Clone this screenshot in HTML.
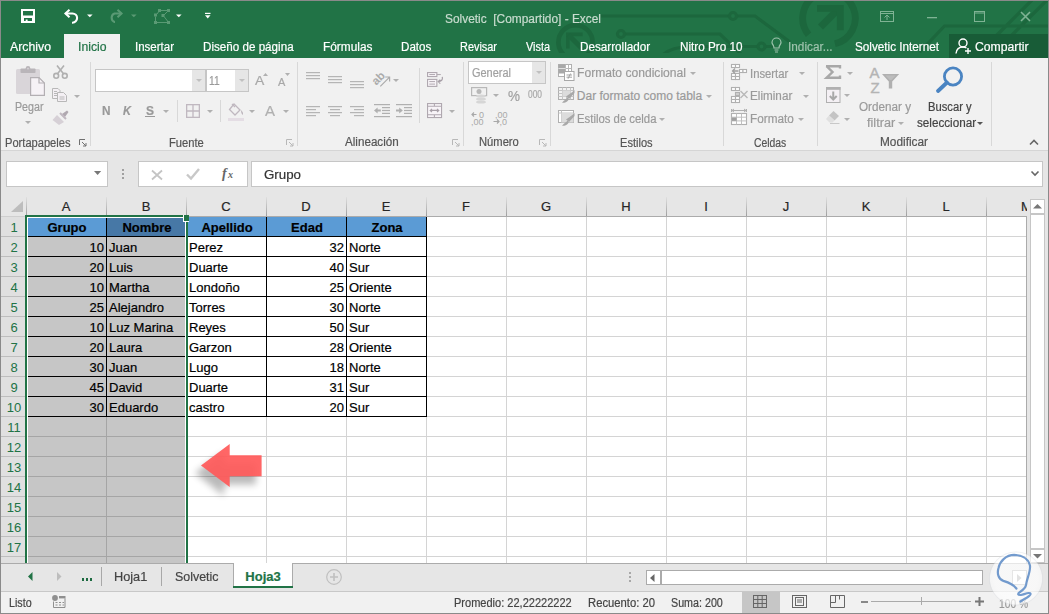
<!DOCTYPE html><html><head><meta charset="utf-8"><style>
html,body{margin:0;padding:0;}
body{width:1049px;height:614px;overflow:hidden;position:relative;background:#f1f1f1;font-family:"Liberation Sans",sans-serif;}
.t{position:absolute;white-space:nowrap;-webkit-text-stroke-width:0.2px;font-family:"Liberation Sans",sans-serif;}
svg{overflow:visible}
</style></head><body>
<div style="position:absolute;left:0px;top:0px;width:1049px;height:58px;background:#217346;"></div>
<svg style="position:absolute;left:0px;top:0px;overflow:hidden;" width="1049" height="53" viewBox="0 0 1049 53">
<g stroke="#1c673d" stroke-width="3.2" fill="none">
<path d="M601 16 H729.5 M736.5 16 H755 L790 42"/>
<circle cx="733" cy="16" r="3.5"/>
<path d="M624.5 34 H720 L745 58"/>
<circle cx="621" cy="34" r="3.5"/>
<path d="M660 58 Q668 47 690 46.5 H758 M765 46.5 H775"/>
<circle cx="761.5" cy="46.5" r="3.5"/>
<path d="M808.56 34.75 A26.3 26.3 0 1 1 834.9 43.8" stroke-width="6.8"/>
<path d="M820.5 27 L840 7.5" stroke-width="7"/>
<path d="M919.5 52.3 L944.5 26 H1049 M996 36 L1032 0 M1011 36 L1047 0"/>
</g>
<path d="M817 4.9 H843.7 V30.3 H836.9 V11.7 H817 Z" fill="#1c673d"/>
<circle cx="575.5" cy="42.2" r="17.1" fill="none" stroke="#1c673d" stroke-width="4.6"/>
<path d="M566 32.4 H582.6 V36.2 H569.6 V48.6 H566 Z" fill="#1c673d"/>
<path d="M568.5 35 L583 49.5" stroke="#1c673d" stroke-width="5"/>
</svg>
<div style="position:absolute;left:0px;top:0px;width:1049px;height:1px;background:#8a8a8a;"></div>
<div style="position:absolute;left:0px;top:0px;width:1px;height:614px;background:#8a8a8a;"></div>
<div style="position:absolute;left:1048px;top:0px;width:1px;height:614px;background:#8a8a8a;"></div>
<div style="position:absolute;left:0px;top:613px;width:1049px;height:1px;background:#8a8a8a;"></div>
<svg style="position:absolute;left:21px;top:9px;" width="14" height="14" viewBox="0 0 14 14"><path fill="#fff" fill-rule="evenodd" d="M0 0 H14 V14 H0 Z M2 2 V6.5 H12 V2 Z M3 9 V12 H4.7 V10.6 H6.6 V12 H11 V9 Z"/></svg>
<svg style="position:absolute;left:64px;top:9px;" width="15" height="14" viewBox="0 0 15 14"><g fill="none" stroke="#fff" stroke-width="2.1"><path d="M1.5 4.5 H8.5 A4.6 4.6 0 0 1 8.5 13.7 H8"/><path d="M5.5 0.8 L1.5 4.5 L5.5 8.2"/></g></svg>
<svg style="position:absolute;left:87px;top:14px;" width="6" height="4" viewBox="0 0 6 4"><path d="M0 0.5 H5.6 L2.8 3.2 Z" fill="#fff"/></svg>
<svg style="position:absolute;left:108px;top:9px;" width="15" height="13" viewBox="0 0 15 13"><g fill="none" stroke="#5a9a74" stroke-width="2.1"><path d="M13.5 4.5 H6.5 A4.6 4.6 0 0 0 6.5 13 H7"/><path d="M9.5 0.8 L13.5 4.5 L9.5 8.2"/></g></svg>
<svg style="position:absolute;left:131px;top:14px;" width="6" height="4" viewBox="0 0 6 4"><path d="M0 0.5 H5.6 L2.8 3.2 Z" fill="#5a9a74"/></svg>
<svg style="position:absolute;left:154px;top:9px;" width="17" height="15" viewBox="0 0 17 15"><g fill="#5a9a74"><rect x="4" y="0" width="3" height="3"/><rect x="13" y="0" width="3" height="3"/><rect x="7.5" y="5" width="3" height="3"/><rect x="0" y="4.5" width="3" height="3"/><rect x="0" y="12" width="3" height="3"/><rect x="13" y="12" width="3" height="3"/></g><g stroke="#5a9a74" stroke-width="1" fill="none"><path d="M7 1.5 H13 M13.5 2.5 L10 6 M10 7.5 L13.5 12 M3 13.5 H13 M1.5 7.5 V12 M3 5 L4.5 3"/></g></svg>
<svg style="position:absolute;left:176px;top:14px;" width="6" height="4" viewBox="0 0 6 4"><path d="M0 0.5 H5.6 L2.8 3.2 Z" fill="#fff"/></svg>
<svg style="position:absolute;left:205px;top:12px;" width="6" height="7" viewBox="0 0 6 7"><rect x="0" y="0.8" width="5.5" height="1.2" fill="#fff"/><path d="M0 3.2 H5.5 L2.75 6.5 Z" fill="#fff"/></svg>
<div class="t" style="left:445.0px;top:13px;font-size:12px;line-height:12px;color:#c9dccf;font-weight:normal;transform:scaleX(0.9912);transform-origin:0 0;">Solvetic&nbsp; [Compartido] - Excel</div>
<svg style="position:absolute;left:880px;top:11px;" width="14" height="11" viewBox="0 0 14 11"><g fill="none" stroke="#7fb394" stroke-width="1"><rect x="0.5" y="0.5" width="13" height="10"/><path d="M0.5 2.5 H13.5"/><path d="M7 9 V4 M4.5 6.5 L7 4 L9.5 6.5"/></g></svg>
<svg style="position:absolute;left:927px;top:17px;" width="11" height="2" viewBox="0 0 11 2"><rect width="10" height="1.3" fill="#7fb394"/></svg>
<svg style="position:absolute;left:974px;top:11px;" width="11" height="11" viewBox="0 0 11 11"><g fill="none" stroke="#7fb394" stroke-width="1"><rect x="0.5" y="0.5" width="10" height="10"/><path d="M0.5 2 H10.5"/></g></svg>
<svg style="position:absolute;left:1020px;top:11px;" width="11" height="11" viewBox="0 0 11 11"><g stroke="#7fb394" stroke-width="1.6"><path d="M1 1 L10 10 M10 1 L1 10"/></g></svg>
<div style="position:absolute;left:64px;top:34px;width:56px;height:24px;background:#f1f1f1;"></div>
<div class="t" style="left:10.0px;top:41px;font-size:12px;line-height:12px;color:#fff;font-weight:normal;transform:scaleX(1.0246);transform-origin:0 0;">Archivo</div>
<div class="t" style="left:77.5px;top:41px;font-size:12px;line-height:12px;color:#217346;font-weight:normal;transform:scaleX(1.0174);transform-origin:0 0;">Inicio</div>
<div class="t" style="left:135.3px;top:41px;font-size:12px;line-height:12px;color:#fff;font-weight:normal;transform:scaleX(0.9587);transform-origin:0 0;">Insertar</div>
<div class="t" style="left:203.3px;top:41px;font-size:12px;line-height:12px;color:#fff;font-weight:normal;transform:scaleX(0.9700);transform-origin:0 0;">Diseño de página</div>
<div class="t" style="left:322.9px;top:41px;font-size:12px;line-height:12px;color:#fff;font-weight:normal;transform:scaleX(0.9878);transform-origin:0 0;">Fórmulas</div>
<div class="t" style="left:400.7px;top:41px;font-size:12px;line-height:12px;color:#fff;font-weight:normal;transform:scaleX(0.9666);transform-origin:0 0;">Datos</div>
<div class="t" style="left:460.0px;top:41px;font-size:12px;line-height:12px;color:#fff;font-weight:normal;transform:scaleX(0.9096);transform-origin:0 0;">Revisar</div>
<div class="t" style="left:526.3px;top:41px;font-size:12px;line-height:12px;color:#fff;font-weight:normal;transform:scaleX(0.9108);transform-origin:0 0;">Vista</div>
<div class="t" style="left:580.3px;top:41px;font-size:12px;line-height:12px;color:#fff;font-weight:normal;transform:scaleX(0.9746);transform-origin:0 0;">Desarrollador</div>
<div class="t" style="left:679.5px;top:41px;font-size:12px;line-height:12px;color:#fff;font-weight:normal;transform:scaleX(0.9762);transform-origin:0 0;">Nitro Pro 10</div>
<svg style="position:absolute;left:771px;top:38px;" width="11" height="15" viewBox="0 0 11 15"><g fill="none" stroke="#9fc3ad" stroke-width="1.2"><path d="M3 10 C3 7 1 6.5 1 4.5 A4.5 4.5 0 0 1 10 4.5 C10 6.5 8 7 8 10 Z"/><path d="M3.5 12 H7.5 M4 14 H7"/></g></svg>
<div class="t" style="left:788.4px;top:41px;font-size:12px;line-height:12px;color:#9fc3ad;font-weight:normal;transform:scaleX(0.9833);transform-origin:0 0;">Indicar...</div>
<div class="t" style="left:854.5px;top:41px;font-size:12px;line-height:12px;color:#fff;font-weight:normal;transform:scaleX(0.9762);transform-origin:0 0;">Solvetic Internet</div>
<div style="position:absolute;left:949px;top:34px;width:99px;height:24px;background:#185c37;"></div>
<svg style="position:absolute;left:955px;top:38px;" width="17" height="16" viewBox="0 0 17 16"><g fill="none" stroke="#fff" stroke-width="1.4"><circle cx="8" cy="5" r="4"/><path d="M1 15.5 C1.5 11 4 9 8 9 C9.5 9 10.5 9.4 11.5 10"/><path d="M13 10 V16 M10 13 H16"/></g></svg>
<div class="t" style="left:975.0px;top:41px;font-size:12px;line-height:12px;color:#fff;font-weight:normal;transform:scaleX(1.0175);transform-origin:0 0;">Compartir</div>
<div style="position:absolute;left:1px;top:58px;width:1047px;height:92px;background:#f1f1f1;"></div>
<div style="position:absolute;left:1px;top:150px;width:1047px;height:1px;background:#d5d5d5;"></div>
<div style="position:absolute;left:1px;top:151px;width:1047px;height:46px;background:#e6e6e6;"></div>
<div style="position:absolute;left:6px;top:161px;width:102px;height:26px;background:#fff;border:1px solid #c6c6c6;box-sizing:border-box;"></div>
<svg style="position:absolute;left:94px;top:171px;" width="7" height="4" viewBox="0 0 7 4"><path d="M0 0 H7.2 L3.6 4 Z" fill="#777"/></svg>
<div style="position:absolute;left:122px;top:169px;width:2px;height:2px;background:#a0a0a0;"></div>
<div style="position:absolute;left:122px;top:173px;width:2px;height:2px;background:#a0a0a0;"></div>
<div style="position:absolute;left:122px;top:177px;width:2px;height:2px;background:#a0a0a0;"></div>
<div style="position:absolute;left:138px;top:161px;width:110px;height:26px;background:#fff;border:1px solid #c6c6c6;box-sizing:border-box;"></div>
<svg style="position:absolute;left:151px;top:170px;" width="12" height="10" viewBox="0 0 12 10"><path d="M1 0.5 L11 9.5 M11 0.5 L1 9.5" stroke="#c4c4c4" stroke-width="1.8"/></svg>
<svg style="position:absolute;left:186px;top:168px;" width="14" height="12" viewBox="0 0 14 12"><path d="M1 6.5 L5 10.5 L13 1" stroke="#c8c8c8" stroke-width="2.4" fill="none"/></svg>
<svg style="position:absolute;left:221px;top:165px;" width="16" height="16" viewBox="0 0 16 16"><text x="1" y="13" font-family="Liberation Serif" font-style="italic" font-weight="bold" font-size="14" fill="#666">f</text><text x="7" y="13" font-family="Liberation Serif" font-style="italic" font-weight="bold" font-size="10" fill="#666">x</text></svg>
<div style="position:absolute;left:251px;top:161px;width:792px;height:26px;background:#fff;border:1px solid #c6c6c6;box-sizing:border-box;"></div>
<div class="t" style="left:263.6px;top:168px;font-size:13px;line-height:13px;color:#333;font-weight:normal;transform:scaleX(1.0241);transform-origin:0 0;">Grupo</div>
<svg style="position:absolute;left:1031px;top:171px;" width="8" height="6" viewBox="0 0 8 6"><path d="M0.5 0.5 L4 4 L7.5 0.5" stroke="#666" stroke-width="1.6" fill="none"/></svg>
<svg style="position:absolute;left:0px;top:0px;" width="1049" height="614" viewBox="0 0 1049 614"><rect x="1" y="197" width="1026" height="19" fill="#e6e6e6"/><rect x="1" y="216" width="25" height="347" fill="#e0e0e0"/><rect x="27" y="217" width="999" height="346" fill="#fff"/><rect x="106" y="217" width="1" height="346" fill="#d4d4d4"/><rect x="186" y="217" width="1" height="346" fill="#d4d4d4"/><rect x="266" y="217" width="1" height="346" fill="#d4d4d4"/><rect x="346" y="217" width="1" height="346" fill="#d4d4d4"/><rect x="426" y="217" width="1" height="346" fill="#d4d4d4"/><rect x="506" y="217" width="1" height="346" fill="#d4d4d4"/><rect x="586" y="217" width="1" height="346" fill="#d4d4d4"/><rect x="666" y="217" width="1" height="346" fill="#d4d4d4"/><rect x="746" y="217" width="1" height="346" fill="#d4d4d4"/><rect x="826" y="217" width="1" height="346" fill="#d4d4d4"/><rect x="906" y="217" width="1" height="346" fill="#d4d4d4"/><rect x="986" y="217" width="1" height="346" fill="#d4d4d4"/><rect x="27" y="236" width="999" height="1" fill="#d4d4d4"/><rect x="27" y="256" width="999" height="1" fill="#d4d4d4"/><rect x="27" y="276" width="999" height="1" fill="#d4d4d4"/><rect x="27" y="296" width="999" height="1" fill="#d4d4d4"/><rect x="27" y="316" width="999" height="1" fill="#d4d4d4"/><rect x="27" y="336" width="999" height="1" fill="#d4d4d4"/><rect x="27" y="356" width="999" height="1" fill="#d4d4d4"/><rect x="27" y="376" width="999" height="1" fill="#d4d4d4"/><rect x="27" y="396" width="999" height="1" fill="#d4d4d4"/><rect x="27" y="416" width="999" height="1" fill="#d4d4d4"/><rect x="27" y="436" width="999" height="1" fill="#d4d4d4"/><rect x="27" y="456" width="999" height="1" fill="#d4d4d4"/><rect x="27" y="476" width="999" height="1" fill="#d4d4d4"/><rect x="27" y="496" width="999" height="1" fill="#d4d4d4"/><rect x="27" y="516" width="999" height="1" fill="#d4d4d4"/><rect x="27" y="536" width="999" height="1" fill="#d4d4d4"/><rect x="27" y="556" width="999" height="1" fill="#d4d4d4"/><defs><linearGradient id="hd" x1="0" y1="0" x2="0" y2="1"><stop offset="0" stop-color="#e0e0e0"/><stop offset="1" stop-color="#9e9e9e"/></linearGradient></defs><rect x="26" y="197" width="1" height="19" fill="url(#hd)"/><rect x="106" y="197" width="1" height="19" fill="url(#hd)"/><rect x="186" y="197" width="1" height="19" fill="url(#hd)"/><rect x="266" y="197" width="1" height="19" fill="url(#hd)"/><rect x="346" y="197" width="1" height="19" fill="url(#hd)"/><rect x="426" y="197" width="1" height="19" fill="url(#hd)"/><rect x="506" y="197" width="1" height="19" fill="url(#hd)"/><rect x="586" y="197" width="1" height="19" fill="url(#hd)"/><rect x="666" y="197" width="1" height="19" fill="url(#hd)"/><rect x="746" y="197" width="1" height="19" fill="url(#hd)"/><rect x="826" y="197" width="1" height="19" fill="url(#hd)"/><rect x="906" y="197" width="1" height="19" fill="url(#hd)"/><rect x="986" y="197" width="1" height="19" fill="url(#hd)"/><rect x="1" y="216" width="25" height="1" fill="#cfcfcf"/><rect x="26" y="216" width="1000" height="1" fill="#ababab"/><rect x="1" y="236" width="25" height="1" fill="#bebebe"/><rect x="1" y="256" width="25" height="1" fill="#bebebe"/><rect x="1" y="276" width="25" height="1" fill="#bebebe"/><rect x="1" y="296" width="25" height="1" fill="#bebebe"/><rect x="1" y="316" width="25" height="1" fill="#bebebe"/><rect x="1" y="336" width="25" height="1" fill="#bebebe"/><rect x="1" y="356" width="25" height="1" fill="#bebebe"/><rect x="1" y="376" width="25" height="1" fill="#bebebe"/><rect x="1" y="396" width="25" height="1" fill="#bebebe"/><rect x="1" y="416" width="25" height="1" fill="#bebebe"/><rect x="1" y="436" width="25" height="1" fill="#bebebe"/><rect x="1" y="456" width="25" height="1" fill="#bebebe"/><rect x="1" y="476" width="25" height="1" fill="#bebebe"/><rect x="1" y="496" width="25" height="1" fill="#bebebe"/><rect x="1" y="516" width="25" height="1" fill="#bebebe"/><rect x="1" y="536" width="25" height="1" fill="#bebebe"/><rect x="1" y="556" width="25" height="1" fill="#bebebe"/><rect x="26" y="216" width="1" height="347" fill="#ababab"/><rect x="187" y="217" width="240" height="19" fill="#5b9bd5"/><rect x="27" y="217" width="80" height="19" fill="#5b9bd5"/><rect x="107" y="217" width="80" height="19" fill="#4778a6"/><rect x="27" y="237" width="160" height="326" fill="#c6c6c6"/><rect x="27" y="256" width="160" height="1" fill="#a5a5a5"/><rect x="27" y="276" width="160" height="1" fill="#a5a5a5"/><rect x="27" y="296" width="160" height="1" fill="#a5a5a5"/><rect x="27" y="316" width="160" height="1" fill="#a5a5a5"/><rect x="27" y="336" width="160" height="1" fill="#a5a5a5"/><rect x="27" y="356" width="160" height="1" fill="#a5a5a5"/><rect x="27" y="376" width="160" height="1" fill="#a5a5a5"/><rect x="27" y="396" width="160" height="1" fill="#a5a5a5"/><rect x="27" y="416" width="160" height="1" fill="#a5a5a5"/><rect x="27" y="436" width="160" height="1" fill="#a5a5a5"/><rect x="27" y="456" width="160" height="1" fill="#a5a5a5"/><rect x="27" y="476" width="160" height="1" fill="#a5a5a5"/><rect x="27" y="496" width="160" height="1" fill="#a5a5a5"/><rect x="27" y="516" width="160" height="1" fill="#a5a5a5"/><rect x="27" y="536" width="160" height="1" fill="#a5a5a5"/><rect x="27" y="556" width="160" height="1" fill="#a5a5a5"/><rect x="106" y="237" width="1" height="326" fill="#a5a5a5"/><rect x="26" y="236" width="401" height="1" fill="#000"/><rect x="26" y="256" width="401" height="1" fill="#000"/><rect x="26" y="276" width="401" height="1" fill="#000"/><rect x="26" y="296" width="401" height="1" fill="#000"/><rect x="26" y="316" width="401" height="1" fill="#000"/><rect x="26" y="336" width="401" height="1" fill="#000"/><rect x="26" y="356" width="401" height="1" fill="#000"/><rect x="26" y="376" width="401" height="1" fill="#000"/><rect x="26" y="396" width="401" height="1" fill="#000"/><rect x="26" y="416" width="401" height="1" fill="#000"/><rect x="106" y="217" width="1" height="200" fill="#000"/><rect x="186" y="217" width="1" height="200" fill="#000"/><rect x="266" y="217" width="1" height="200" fill="#000"/><rect x="346" y="217" width="1" height="200" fill="#000"/><rect x="426" y="217" width="1" height="200" fill="#000"/><rect x="27" y="217" width="158" height="1" fill="#fff"/><rect x="27" y="217" width="1" height="346" fill="#fff"/><rect x="185" y="217" width="1" height="346" fill="#fff"/><rect x="25" y="215" width="163" height="2" fill="#217346"/><rect x="25" y="215" width="2" height="348" fill="#217346"/><rect x="186" y="215" width="2" height="348" fill="#217346"/><rect x="183" y="215" width="6" height="7" fill="#fff"/><rect x="184" y="215" width="5" height="6" fill="#217346"/><rect x="1026" y="216" width="1" height="347" fill="#ababab"/><path d="M23 201 V212 H11 Z" fill="#bdbdbd"/></svg>
<div class="t" style="left:61.7px;top:200px;font-size:13px;line-height:13px;color:#262626;font-weight:normal;">A</div>
<div class="t" style="left:141.7px;top:200px;font-size:13px;line-height:13px;color:#262626;font-weight:normal;">B</div>
<div class="t" style="left:221.3px;top:200px;font-size:13px;line-height:13px;color:#262626;font-weight:normal;">C</div>
<div class="t" style="left:301.3px;top:200px;font-size:13px;line-height:13px;color:#262626;font-weight:normal;">D</div>
<div class="t" style="left:381.7px;top:200px;font-size:13px;line-height:13px;color:#262626;font-weight:normal;">E</div>
<div class="t" style="left:462.0px;top:200px;font-size:13px;line-height:13px;color:#262626;font-weight:normal;">F</div>
<div class="t" style="left:540.9px;top:200px;font-size:13px;line-height:13px;color:#262626;font-weight:normal;">G</div>
<div class="t" style="left:621.3px;top:200px;font-size:13px;line-height:13px;color:#262626;font-weight:normal;">H</div>
<div class="t" style="left:704.2px;top:200px;font-size:13px;line-height:13px;color:#262626;font-weight:normal;">I</div>
<div class="t" style="left:782.8px;top:200px;font-size:13px;line-height:13px;color:#262626;font-weight:normal;">J</div>
<div class="t" style="left:861.7px;top:200px;font-size:13px;line-height:13px;color:#262626;font-weight:normal;">K</div>
<div class="t" style="left:942.4px;top:200px;font-size:13px;line-height:13px;color:#262626;font-weight:normal;">L</div>
<div class="t" style="left:1021.0px;top:200px;font-size:13px;line-height:13px;color:#262626;font-weight:normal;">M</div>
<div class="t" style="left:10.4px;top:221px;font-size:13px;line-height:13px;color:#217346;font-weight:normal;-webkit-text-stroke-width:0;">1</div>
<div class="t" style="left:10.4px;top:241px;font-size:13px;line-height:13px;color:#217346;font-weight:normal;-webkit-text-stroke-width:0;">2</div>
<div class="t" style="left:10.4px;top:261px;font-size:13px;line-height:13px;color:#217346;font-weight:normal;-webkit-text-stroke-width:0;">3</div>
<div class="t" style="left:10.4px;top:281px;font-size:13px;line-height:13px;color:#217346;font-weight:normal;-webkit-text-stroke-width:0;">4</div>
<div class="t" style="left:10.4px;top:301px;font-size:13px;line-height:13px;color:#217346;font-weight:normal;-webkit-text-stroke-width:0;">5</div>
<div class="t" style="left:10.4px;top:321px;font-size:13px;line-height:13px;color:#217346;font-weight:normal;-webkit-text-stroke-width:0;">6</div>
<div class="t" style="left:10.4px;top:341px;font-size:13px;line-height:13px;color:#217346;font-weight:normal;-webkit-text-stroke-width:0;">7</div>
<div class="t" style="left:10.4px;top:361px;font-size:13px;line-height:13px;color:#217346;font-weight:normal;-webkit-text-stroke-width:0;">8</div>
<div class="t" style="left:10.4px;top:381px;font-size:13px;line-height:13px;color:#217346;font-weight:normal;-webkit-text-stroke-width:0;">9</div>
<div class="t" style="left:6.8px;top:401px;font-size:13px;line-height:13px;color:#217346;font-weight:normal;-webkit-text-stroke-width:0;">10</div>
<div class="t" style="left:7.3px;top:421px;font-size:13px;line-height:13px;color:#217346;font-weight:normal;-webkit-text-stroke-width:0;">11</div>
<div class="t" style="left:6.8px;top:441px;font-size:13px;line-height:13px;color:#217346;font-weight:normal;-webkit-text-stroke-width:0;">12</div>
<div class="t" style="left:6.8px;top:461px;font-size:13px;line-height:13px;color:#217346;font-weight:normal;-webkit-text-stroke-width:0;">13</div>
<div class="t" style="left:6.8px;top:481px;font-size:13px;line-height:13px;color:#217346;font-weight:normal;-webkit-text-stroke-width:0;">14</div>
<div class="t" style="left:6.8px;top:501px;font-size:13px;line-height:13px;color:#217346;font-weight:normal;-webkit-text-stroke-width:0;">15</div>
<div class="t" style="left:6.8px;top:521px;font-size:13px;line-height:13px;color:#217346;font-weight:normal;-webkit-text-stroke-width:0;">16</div>
<div class="t" style="left:6.8px;top:541px;font-size:13px;line-height:13px;color:#217346;font-weight:normal;-webkit-text-stroke-width:0;">17</div>
<div class="t" style="left:47.5px;top:221px;font-size:13px;line-height:13px;color:#000;font-weight:bold;">Grupo</div>
<div class="t" style="left:122.4px;top:221px;font-size:13px;line-height:13px;color:#000;font-weight:bold;">Nombre</div>
<div class="t" style="left:201.4px;top:221px;font-size:13px;line-height:13px;color:#000;font-weight:bold;">Apellido</div>
<div class="t" style="left:291.1px;top:221px;font-size:13px;line-height:13px;color:#000;font-weight:bold;">Edad</div>
<div class="t" style="left:371.5px;top:221px;font-size:13px;line-height:13px;color:#000;font-weight:bold;">Zona</div>
<div class="t" style="left:89.5px;top:241px;font-size:13px;line-height:13px;color:#000;font-weight:normal;">10</div>
<div class="t" style="left:109.0px;top:241px;font-size:13px;line-height:13px;color:#000;font-weight:normal;">Juan</div>
<div class="t" style="left:189.0px;top:241px;font-size:13px;line-height:13px;color:#000;font-weight:normal;">Perez</div>
<div class="t" style="left:329.5px;top:241px;font-size:13px;line-height:13px;color:#000;font-weight:normal;">32</div>
<div class="t" style="left:349.0px;top:241px;font-size:13px;line-height:13px;color:#000;font-weight:normal;">Norte</div>
<div class="t" style="left:89.5px;top:261px;font-size:13px;line-height:13px;color:#000;font-weight:normal;">20</div>
<div class="t" style="left:109.0px;top:261px;font-size:13px;line-height:13px;color:#000;font-weight:normal;">Luis</div>
<div class="t" style="left:189.0px;top:261px;font-size:13px;line-height:13px;color:#000;font-weight:normal;">Duarte</div>
<div class="t" style="left:329.5px;top:261px;font-size:13px;line-height:13px;color:#000;font-weight:normal;">40</div>
<div class="t" style="left:349.0px;top:261px;font-size:13px;line-height:13px;color:#000;font-weight:normal;">Sur</div>
<div class="t" style="left:89.5px;top:281px;font-size:13px;line-height:13px;color:#000;font-weight:normal;">10</div>
<div class="t" style="left:109.0px;top:281px;font-size:13px;line-height:13px;color:#000;font-weight:normal;">Martha</div>
<div class="t" style="left:189.0px;top:281px;font-size:13px;line-height:13px;color:#000;font-weight:normal;">Londoño</div>
<div class="t" style="left:329.5px;top:281px;font-size:13px;line-height:13px;color:#000;font-weight:normal;">25</div>
<div class="t" style="left:349.0px;top:281px;font-size:13px;line-height:13px;color:#000;font-weight:normal;">Oriente</div>
<div class="t" style="left:89.5px;top:301px;font-size:13px;line-height:13px;color:#000;font-weight:normal;">25</div>
<div class="t" style="left:109.0px;top:301px;font-size:13px;line-height:13px;color:#000;font-weight:normal;">Alejandro</div>
<div class="t" style="left:189.0px;top:301px;font-size:13px;line-height:13px;color:#000;font-weight:normal;">Torres</div>
<div class="t" style="left:329.5px;top:301px;font-size:13px;line-height:13px;color:#000;font-weight:normal;">30</div>
<div class="t" style="left:349.0px;top:301px;font-size:13px;line-height:13px;color:#000;font-weight:normal;">Norte</div>
<div class="t" style="left:89.5px;top:321px;font-size:13px;line-height:13px;color:#000;font-weight:normal;">10</div>
<div class="t" style="left:109.0px;top:321px;font-size:13px;line-height:13px;color:#000;font-weight:normal;">Luz Marina</div>
<div class="t" style="left:189.0px;top:321px;font-size:13px;line-height:13px;color:#000;font-weight:normal;">Reyes</div>
<div class="t" style="left:329.5px;top:321px;font-size:13px;line-height:13px;color:#000;font-weight:normal;">50</div>
<div class="t" style="left:349.0px;top:321px;font-size:13px;line-height:13px;color:#000;font-weight:normal;">Sur</div>
<div class="t" style="left:89.5px;top:341px;font-size:13px;line-height:13px;color:#000;font-weight:normal;">20</div>
<div class="t" style="left:109.0px;top:341px;font-size:13px;line-height:13px;color:#000;font-weight:normal;">Laura</div>
<div class="t" style="left:189.0px;top:341px;font-size:13px;line-height:13px;color:#000;font-weight:normal;">Garzon</div>
<div class="t" style="left:329.5px;top:341px;font-size:13px;line-height:13px;color:#000;font-weight:normal;">28</div>
<div class="t" style="left:349.0px;top:341px;font-size:13px;line-height:13px;color:#000;font-weight:normal;">Oriente</div>
<div class="t" style="left:89.5px;top:361px;font-size:13px;line-height:13px;color:#000;font-weight:normal;">30</div>
<div class="t" style="left:109.0px;top:361px;font-size:13px;line-height:13px;color:#000;font-weight:normal;">Juan</div>
<div class="t" style="left:189.0px;top:361px;font-size:13px;line-height:13px;color:#000;font-weight:normal;">Lugo</div>
<div class="t" style="left:329.5px;top:361px;font-size:13px;line-height:13px;color:#000;font-weight:normal;">18</div>
<div class="t" style="left:349.0px;top:361px;font-size:13px;line-height:13px;color:#000;font-weight:normal;">Norte</div>
<div class="t" style="left:89.5px;top:381px;font-size:13px;line-height:13px;color:#000;font-weight:normal;">45</div>
<div class="t" style="left:109.0px;top:381px;font-size:13px;line-height:13px;color:#000;font-weight:normal;">David</div>
<div class="t" style="left:189.0px;top:381px;font-size:13px;line-height:13px;color:#000;font-weight:normal;">Duarte</div>
<div class="t" style="left:329.5px;top:381px;font-size:13px;line-height:13px;color:#000;font-weight:normal;">31</div>
<div class="t" style="left:349.0px;top:381px;font-size:13px;line-height:13px;color:#000;font-weight:normal;">Sur</div>
<div class="t" style="left:89.5px;top:401px;font-size:13px;line-height:13px;color:#000;font-weight:normal;">30</div>
<div class="t" style="left:109.0px;top:401px;font-size:13px;line-height:13px;color:#000;font-weight:normal;">Eduardo</div>
<div class="t" style="left:189.0px;top:401px;font-size:13px;line-height:13px;color:#000;font-weight:normal;">castro</div>
<div class="t" style="left:329.5px;top:401px;font-size:13px;line-height:13px;color:#000;font-weight:normal;">20</div>
<div class="t" style="left:349.0px;top:401px;font-size:13px;line-height:13px;color:#000;font-weight:normal;">Sur</div>
<svg style="position:absolute;left:185px;top:430px;" width="90" height="70" viewBox="0 0 90 70"><defs><filter id="sh" x="-50%" y="-50%" width="200%" height="200%"><feGaussianBlur stdDeviation="3.5"/></filter></defs>
<path d="M13 38 L42 17 V28.5 H74 V49.5 H42 V61 Z" fill="#000" opacity="0.27" filter="url(#sh)" transform="translate(-3,5)"/>
<path d="M16 35.4 L44.7 13.9 V25.3 H76.6 V46.2 H44.7 V57 Z" fill="#ff5a5a" opacity="0.93"/></svg>
<div style="position:absolute;left:90px;top:62px;width:1px;height:84px;background:#d8d8d8;"></div>
<div style="position:absolute;left:297px;top:62px;width:1px;height:84px;background:#d8d8d8;"></div>
<div style="position:absolute;left:463px;top:62px;width:1px;height:84px;background:#d8d8d8;"></div>
<div style="position:absolute;left:550px;top:62px;width:1px;height:84px;background:#d8d8d8;"></div>
<div style="position:absolute;left:723px;top:62px;width:1px;height:84px;background:#d8d8d8;"></div>
<div style="position:absolute;left:817px;top:62px;width:1px;height:84px;background:#d8d8d8;"></div>
<div style="position:absolute;left:991px;top:62px;width:1px;height:84px;background:#d8d8d8;"></div>
<svg style="position:absolute;left:16px;top:66px;" width="29" height="31" viewBox="0 0 29 31"><rect x="0" y="3" width="24" height="25" rx="1.5" fill="#d9d5d9"/>
<rect x="4.5" y="2.5" width="15" height="4.5" rx="0.8" fill="#b9b5b9"/><circle cx="12" cy="2.3" r="2.3" fill="#b9b5b9"/><circle cx="12" cy="2.6" r="0.9" fill="#d9d5d9"/>
<path d="M14.6 11.6 H23 L28.4 17 V29.4 H14.6 Z" fill="#f6f2f6" stroke="#b3afb3" stroke-width="1.2"/><path d="M23 11.6 V17 H28.4" fill="none" stroke="#b3afb3" stroke-width="1.2"/></svg>
<div class="t" style="left:14.5px;top:101px;font-size:12px;line-height:12px;color:#9a9a9a;font-weight:normal;transform:scaleX(0.8900);transform-origin:0 0;">Pegar</div>
<svg style="position:absolute;left:24.7px;top:121px;" width="6" height="4" viewBox="0 0 6 4"><path d="M0 0 H6 L3 3 Z" fill="#b0b0b0"/></svg>
<svg style="position:absolute;left:53px;top:65px;" width="15" height="14" viewBox="0 0 15 14"><g fill="none" stroke="#b0b0b0" stroke-width="1.6"><circle cx="3.2" cy="10.8" r="2.4"/><circle cx="11.8" cy="10.8" r="2.4"/><path d="M4.5 8.8 L11 0.5 M10.5 8.8 L4 0.5"/></g></svg>
<svg style="position:absolute;left:52px;top:88px;" width="16" height="14" viewBox="0 0 16 14"><g fill="#f4f0f4" stroke="#b8b8b8" stroke-width="1"><path d="M0.5 0.5 H6 L8 2.5 V10.5 H0.5 Z"/><path d="M5.5 4.5 H11.5 L14.5 7.5 V13.5 H5.5 Z"/></g><g stroke="#b8b8b8" stroke-width="1"><path d="M2 3.5 H5 M2 5.5 H5 M2 7.5 H5 M7.5 9 H12.5 M7.5 11 H12.5"/></g></svg>
<svg style="position:absolute;left:73.5px;top:94.5px;" width="6" height="4" viewBox="0 0 6 4"><path d="M0 0 H6 L3 3 Z" fill="#b0b0b0"/></svg>
<svg style="position:absolute;left:52px;top:110px;" width="17" height="15" viewBox="0 0 17 15"><path d="M10 4 L15 0.5 L16.5 2 L13 7 Z" fill="#b0a8b0"/><path d="M5 5 L12 12 L7 15 L0.5 10 Z" fill="#d6d0d6"/><path d="M8 3 L14 9" stroke="#c0b8c0" stroke-width="2"/></svg>
<div class="t" style="left:4.5px;top:137px;font-size:12px;line-height:12px;color:#555555;font-weight:normal;transform:scaleX(0.9262);transform-origin:0 0;">Portapapeles</div>
<svg style="position:absolute;left:79px;top:139px;" width="8" height="8" viewBox="0 0 8 8"><g fill="none" stroke="#707070" stroke-width="1"><path d="M0.5 6 V0.5 H6"/><path d="M3 3 L7 7 M7 4 V7 H4"/></g></svg>
<div style="position:absolute;left:95px;top:69px;width:111px;height:23px;background:#fff;border:1px solid #c6c6c6;box-sizing:border-box;"></div>
<div style="position:absolute;left:192px;top:70px;width:13px;height:21px;background:#e6e6e6;"></div>
<svg style="position:absolute;left:195.5px;top:78.5px;" width="6" height="4" viewBox="0 0 6 4"><path d="M0 0 H6 L3 3 Z" fill="#c0c0c0"/></svg>
<div style="position:absolute;left:206px;top:69px;width:43px;height:23px;background:#fff;border:1px solid #c6c6c6;box-sizing:border-box;"></div>
<div style="position:absolute;left:235px;top:70px;width:13px;height:21px;background:#e6e6e6;"></div>
<svg style="position:absolute;left:238.5px;top:78.5px;" width="6" height="4" viewBox="0 0 6 4"><path d="M0 0 H6 L3 3 Z" fill="#c0c0c0"/></svg>
<div class="t" style="left:209.4px;top:75px;font-size:12px;line-height:12px;color:#9a9a9a;font-weight:normal;transform:scaleX(0.8509);transform-origin:0 0;">11</div>
<div class="t" style="left:255.2px;top:74px;font-size:13px;line-height:13px;color:#a8a8a8;font-weight:normal;transform:scaleX(1.0726);transform-origin:0 0;">A</div>
<svg style="position:absolute;left:262.8px;top:73px;" width="5" height="3" viewBox="0 0 5 3"><path d="M0 3 L2.5 0 L5 3 Z" fill="#b0b0b0"/></svg>
<div class="t" style="left:278.2px;top:77px;font-size:11px;line-height:11px;color:#a8a8a8;font-weight:normal;transform:scaleX(0.9950);transform-origin:0 0;">A</div>
<svg style="position:absolute;left:285.3px;top:73px;" width="5" height="3" viewBox="0 0 5 3"><path d="M0 0 L2.5 3 L5 0 Z" fill="#b0b0b0"/></svg>
<div class="t" style="left:101.5px;top:104px;font-size:13px;line-height:13px;color:#999;font-weight:bold;transform:scaleX(0.9054);transform-origin:0 0;">N</div>
<div class="t" style="left:123.0px;top:104px;font-size:13px;line-height:13px;color:#999;font-weight:bold;transform:scaleX(0.8521);transform-origin:0 0;"><i>K</i></div>
<div class="t" style="left:146.0px;top:104px;font-size:13px;line-height:13px;color:#999;font-weight:bold;transform:scaleX(0.9226);transform-origin:0 0;">S</div>
<div style="position:absolute;left:145px;top:116px;width:10px;height:1px;background:#999;"></div>
<svg style="position:absolute;left:163px;top:110px;" width="6" height="4" viewBox="0 0 6 4"><path d="M0 0 H6 L3 3 Z" fill="#b0b0b0"/></svg>
<div style="position:absolute;left:177px;top:100px;width:1px;height:22px;background:#d8d8d8;"></div>
<svg style="position:absolute;left:186px;top:104px;" width="14" height="14" viewBox="0 0 14 14"><g fill="none" stroke="#c0b8c0" stroke-width="1.3"><rect x="0.65" y="0.65" width="12.7" height="12.7"/><path d="M7 0.6 V13.4 M0.6 7 H13.4"/></g></svg>
<svg style="position:absolute;left:206.5px;top:110px;" width="6" height="4" viewBox="0 0 6 4"><path d="M0 0 H6 L3 3 Z" fill="#b0b0b0"/></svg>
<div style="position:absolute;left:220px;top:100px;width:1px;height:22px;background:#d8d8d8;"></div>
<svg style="position:absolute;left:228px;top:103px;" width="17" height="17" viewBox="0 0 17 17"><g fill="none" stroke="#c0b8c0" stroke-width="1.3"><path d="M6 1 L12 7 L7 12 L1.5 6.5 Z"/><path d="M4 1 L7 4"/></g><path d="M13 7 Q16 10 14.5 12 Q13 10 13 7 Z" fill="#b8b0b8"/><rect x="0" y="15" width="16" height="3" fill="#e4dde4"/></svg>
<svg style="position:absolute;left:249px;top:110px;" width="6" height="4" viewBox="0 0 6 4"><path d="M0 0 H6 L3 3 Z" fill="#b0b0b0"/></svg>
<div class="t" style="left:265.0px;top:104px;font-size:14px;line-height:14px;color:#b0b0b0;font-weight:normal;transform:scaleX(1.0709);transform-origin:0 0;">A</div>
<svg style="position:absolute;left:283px;top:110px;" width="6" height="4" viewBox="0 0 6 4"><path d="M0 0 H6 L3 3 Z" fill="#b0b0b0"/></svg>
<div class="t" style="left:168.6px;top:137px;font-size:12px;line-height:12px;color:#555555;font-weight:normal;transform:scaleX(0.9315);transform-origin:0 0;">Fuente</div>
<svg style="position:absolute;left:286px;top:139px;" width="8" height="8" viewBox="0 0 8 8"><g fill="none" stroke="#b8b8b8" stroke-width="1"><path d="M0.5 6 V0.5 H6"/><path d="M3 3 L7 7 M7 4 V7 H4"/></g></svg>
<svg style="position:absolute;left:306px;top:72px;" width="16" height="10" viewBox="0 0 16 10"><rect x="0" y="0" width="14" height="1.2" fill="#b5b5b5"/><rect x="0" y="3" width="14" height="1.2" fill="#b5b5b5"/><rect x="0" y="6" width="14" height="1.2" fill="#b5b5b5"/></svg>
<svg style="position:absolute;left:328px;top:76px;" width="16" height="10" viewBox="0 0 16 10"><rect x="0" y="0" width="14" height="1.2" fill="#b5b5b5"/><rect x="0" y="3" width="14" height="1.2" fill="#b5b5b5"/><rect x="0" y="6" width="14" height="1.2" fill="#b5b5b5"/></svg>
<svg style="position:absolute;left:350px;top:81px;" width="16" height="10" viewBox="0 0 16 10"><rect x="0" y="0" width="14" height="1.2" fill="#b5b5b5"/><rect x="0" y="3" width="14" height="1.2" fill="#b5b5b5"/><rect x="0" y="6" width="14" height="1.2" fill="#b5b5b5"/></svg>
<svg style="position:absolute;left:373px;top:71px;" width="18" height="17" viewBox="0 0 18 17"><text x="0" y="0" text-anchor="middle" font-family="Liberation Sans" font-size="11.5" font-weight="bold" fill="#ababab" transform="translate(8,10) rotate(-45)">ab</text><path d="M7.3 15.3 L16.3 6.3 M12.2 6 H16.6 V10.4" stroke="#ababab" stroke-width="1.2" fill="none"/></svg>
<svg style="position:absolute;left:393px;top:79px;" width="6" height="4" viewBox="0 0 6 4"><path d="M0 0 H6 L3 3 Z" fill="#b0b0b0"/></svg>
<div style="position:absolute;left:419px;top:68px;width:1px;height:55px;background:#d8d8d8;"></div>
<svg style="position:absolute;left:427px;top:72px;" width="17" height="16" viewBox="0 0 17 16"><g fill="#f8f4f8" stroke="#b0a8b0" stroke-width="1.1"><rect x="0.55" y="0.55" width="9.3" height="4"/><rect x="0.55" y="7.4" width="9.3" height="7"/></g><path d="M2.3 2.55 H8 M9.9 2.55 H13.8 M2.3 9.6 H8 M2.3 12.1 H8" stroke="#b0a8b0" stroke-width="1"/><path d="M15.3 4.8 Q16.2 9.3 11.2 9.6 M13.3 7.6 L11.2 9.6 L13.3 11.6" stroke="#a8a0a8" stroke-width="1.2" fill="none"/></svg>
<svg style="position:absolute;left:427px;top:103px;" width="15" height="15" viewBox="0 0 15 15"><rect x="0.55" y="0.55" width="14" height="14" fill="#f8f4f8" stroke="#b0a8b0" stroke-width="1.1"/><path d="M0.6 3.2 H14.6 M0.6 11.8 H14.6 M7.4 0.6 V3.2 M7.4 11.8 V14.6" stroke="#b0a8b0" stroke-width="1.1"/><path d="M3.2 7.4 H11.8 M5 5.8 L3.2 7.4 L5 9 M10 5.8 L11.8 7.4 L10 9" stroke="#a8a0a8" stroke-width="1.1" fill="none"/></svg>
<svg style="position:absolute;left:448.5px;top:110px;" width="6" height="4" viewBox="0 0 6 4"><path d="M0 0 H6 L3 3 Z" fill="#b0b0b0"/></svg>
<svg style="position:absolute;left:306px;top:106px;" width="16" height="13" viewBox="0 0 16 13"><rect x="0" y="0" width="14" height="1.2" fill="#b5b5b5"/><rect x="0" y="3" width="10" height="1.2" fill="#b5b5b5"/><rect x="0" y="6" width="14" height="1.2" fill="#b5b5b5"/><rect x="0" y="9" width="10" height="1.2" fill="#b5b5b5"/></svg>
<svg style="position:absolute;left:328px;top:106px;" width="16" height="13" viewBox="0 0 16 13"><rect x="0" y="0" width="14" height="1.2" fill="#b5b5b5"/><rect x="2" y="3" width="10" height="1.2" fill="#b5b5b5"/><rect x="0" y="6" width="14" height="1.2" fill="#b5b5b5"/><rect x="2" y="9" width="10" height="1.2" fill="#b5b5b5"/></svg>
<svg style="position:absolute;left:350px;top:106px;" width="16" height="13" viewBox="0 0 16 13"><rect x="0" y="0" width="14" height="1.2" fill="#b5b5b5"/><rect x="4" y="3" width="10" height="1.2" fill="#b5b5b5"/><rect x="0" y="6" width="14" height="1.2" fill="#b5b5b5"/><rect x="4" y="9" width="10" height="1.2" fill="#b5b5b5"/></svg>
<svg style="position:absolute;left:374px;top:104px;" width="17" height="14" viewBox="0 0 17 14"><g fill="#b0b0b0"><rect x="0" y="0" width="16" height="1.2"/><rect x="8" y="3" width="8" height="1.2"/><rect x="8" y="5.9" width="8" height="1.2"/><rect x="8" y="8.8" width="8" height="1.2"/><rect x="0" y="12" width="16" height="1.2"/><path d="M0 6.5 L3.6 3.4 V5.4 H6.8 V7.6 H3.6 V9.6 Z"/></g></svg>
<svg style="position:absolute;left:396px;top:104px;" width="17" height="14" viewBox="0 0 17 14"><g fill="#b0b0b0"><rect x="0" y="0" width="16" height="1.2"/><rect x="8" y="3" width="8" height="1.2"/><rect x="8" y="5.9" width="8" height="1.2"/><rect x="8" y="8.8" width="8" height="1.2"/><rect x="0" y="12" width="16" height="1.2"/><path d="M6.8 6.5 L3.2 3.4 V5.4 H0 V7.6 H3.2 V9.6 Z"/></g></svg>
<div class="t" style="left:345.0px;top:136px;font-size:12px;line-height:12px;color:#555555;font-weight:normal;transform:scaleX(0.9698);transform-origin:0 0;">Alineación</div>
<svg style="position:absolute;left:452px;top:139px;" width="8" height="8" viewBox="0 0 8 8"><g fill="none" stroke="#b8b8b8" stroke-width="1"><path d="M0.5 6 V0.5 H6"/><path d="M3 3 L7 7 M7 4 V7 H4"/></g></svg>
<div style="position:absolute;left:468px;top:61px;width:78px;height:23px;background:#fff;border:1px solid #c6c6c6;box-sizing:border-box;"></div>
<div style="position:absolute;left:532px;top:62px;width:13px;height:21px;background:#e6e6e6;"></div>
<svg style="position:absolute;left:535.5px;top:71px;" width="6" height="4" viewBox="0 0 6 4"><path d="M0 0 H6 L3 3 Z" fill="#c0c0c0"/></svg>
<div class="t" style="left:471.7px;top:67px;font-size:12px;line-height:12px;color:#a0a0a0;font-weight:normal;transform:scaleX(0.9135);transform-origin:0 0;">General</div>
<svg style="position:absolute;left:471px;top:87px;" width="17" height="17" viewBox="0 0 17 17"><rect x="0.6" y="0.6" width="15" height="8" fill="none" stroke="#b8b8b8" stroke-width="1.2"/><circle cx="8" cy="4.6" r="2.5" fill="#b8b8b8"/><g fill="#d6d6d6"><ellipse cx="10" cy="9" rx="5" ry="1.6"/><ellipse cx="10" cy="12" rx="5" ry="1.6"/><ellipse cx="10" cy="15" rx="5" ry="1.6"/></g></svg>
<svg style="position:absolute;left:492.5px;top:94px;" width="6" height="4" viewBox="0 0 6 4"><path d="M0 0 H6 L3 3 Z" fill="#b0b0b0"/></svg>
<div class="t" style="left:508.0px;top:88px;font-size:15px;line-height:15px;color:#a0a0a0;font-weight:normal;transform:scaleX(0.8997);transform-origin:0 0;">%</div>
<div class="t" style="left:528.0px;top:90px;font-size:10px;line-height:10px;color:#a8a8a8;font-weight:normal;transform:scaleX(0.8391);transform-origin:0 0;">000</div>
<svg style="position:absolute;left:471px;top:111px;" width="15" height="14" viewBox="0 0 15 14"><path d="M5.5 3.5 H1 M3 1.5 L1 3.5 L3 5.5" stroke="#a8a8a8" stroke-width="1.2" fill="none"/><text x="8" y="7" font-family="Liberation Sans" font-size="9" fill="#a8a8a8">0</text><text x="0" y="14" font-family="Liberation Sans" font-size="9" fill="#a8a8a8">,00</text></svg>
<svg style="position:absolute;left:493px;top:111px;" width="15" height="14" viewBox="0 0 15 14"><text x="2" y="7" font-family="Liberation Sans" font-size="9" fill="#a8a8a8">,00</text><path d="M0.5 10.5 H6 M4 8.5 L6 10.5 L4 12.5" stroke="#a8a8a8" stroke-width="1.2" fill="none"/><text x="6.5" y="14" font-family="Liberation Sans" font-size="9" fill="#a8a8a8">,0</text></svg>
<div class="t" style="left:478.7px;top:136px;font-size:12px;line-height:12px;color:#555555;font-weight:normal;transform:scaleX(0.9325);transform-origin:0 0;">Número</div>
<svg style="position:absolute;left:539px;top:139px;" width="8" height="8" viewBox="0 0 8 8"><g fill="none" stroke="#b8b8b8" stroke-width="1"><path d="M0.5 6 V0.5 H6"/><path d="M3 3 L7 7 M7 4 V7 H4"/></g></svg>
<svg style="position:absolute;left:558px;top:64px;" width="17" height="17" viewBox="0 0 17 17"><rect x="0.5" y="0.5" width="13" height="12" fill="#fff" stroke="#b0b0b0"/><rect x="0.5" y="0.5" width="7" height="9" fill="#a8a8a8"/><path d="M0.5 4.5 H13.5 M7.5 0.5 V12.5 M10.5 0.5 V12.5" stroke="#b8b8b8"/><path d="M0.5 4.5 H7.5" stroke="#e0e0e0"/><rect x="6.5" y="7.5" width="9.5" height="9" fill="#fff" stroke="#a8a8a8"/><path d="M8.5 11 H14 M8.5 13.2 H14 M12.6 9.5 L10 14.8" stroke="#999" stroke-width="0.9"/></svg>
<div class="t" style="left:576.5px;top:67px;font-size:12px;line-height:12px;color:#9a9a9a;font-weight:normal;transform:scaleX(1.0088);transform-origin:0 0;">Formato condicional</div>
<svg style="position:absolute;left:689.5px;top:72px;" width="6" height="4" viewBox="0 0 6 4"><path d="M0 0 H6 L3 3 Z" fill="#b0b0b0"/></svg>
<svg style="position:absolute;left:558px;top:87px;" width="17" height="17" viewBox="0 0 17 17"><rect x="0.5" y="0.5" width="15" height="12" fill="#f2f2f2" stroke="#b0b0b0"/><path d="M0.5 3.5 H15.5 M0.5 6.5 H15.5 M0.5 9.5 H15.5 M4.5 0.5 V12.5 M8.5 0.5 V12.5 M12.5 0.5 V12.5" stroke="#c4c4c4"/><rect x="4.5" y="3.5" width="8" height="6" fill="#dcdcdc"/><path d="M16.5 3.5 L10 11 L8 9.5 Z" fill="#a8a8a8"/><path d="M9.5 10.5 C8.5 12.5 6 13 4 15.8 C7 15.8 10 15 10.8 12 Z" fill="#a8a8a8"/><path d="M16.5 3 V6 L11 12 L9.5 10.5 Z" fill="#a8a8a8"/></svg>
<div class="t" style="left:576.8px;top:90px;font-size:12px;line-height:12px;color:#9a9a9a;font-weight:normal;">Dar formato como tabla</div>
<svg style="position:absolute;left:706px;top:95px;" width="6" height="4" viewBox="0 0 6 4"><path d="M0 0 H6 L3 3 Z" fill="#b0b0b0"/></svg>
<svg style="position:absolute;left:558px;top:110px;" width="17" height="17" viewBox="0 0 17 17"><rect x="0.5" y="0.5" width="15" height="12" fill="#fff" stroke="#b0b0b0"/><path d="M0.5 3 H15.5 M3.5 0.5 V12.5" stroke="#c4c4c4"/><rect x="3.5" y="3" width="12" height="9.5" fill="#dcdcdc"/><path d="M16.5 3.5 L10 11 L8 9.5 Z" fill="#a8a8a8"/><path d="M9.5 10.5 C8.5 12.5 6 13 4 15.8 C7 15.8 10 15 10.8 12 Z" fill="#a8a8a8"/><path d="M16.5 3 V6 L11 12 L9.5 10.5 Z" fill="#a8a8a8"/></svg>
<div class="t" style="left:576.5px;top:113px;font-size:12px;line-height:12px;color:#9a9a9a;font-weight:normal;transform:scaleX(0.9459);transform-origin:0 0;">Estilos de celda</div>
<svg style="position:absolute;left:659px;top:118px;" width="6" height="4" viewBox="0 0 6 4"><path d="M0 0 H6 L3 3 Z" fill="#b0b0b0"/></svg>
<div class="t" style="left:620.0px;top:137px;font-size:12px;line-height:12px;color:#555555;font-weight:normal;transform:scaleX(0.9224);transform-origin:0 0;">Estilos</div>
<svg style="position:absolute;left:731px;top:64px;" width="17" height="16" viewBox="0 0 17 16"><rect x="0.5" y="0.5" width="4" height="3" fill="#fff" stroke="#b0b0b0" stroke-width="1.1"/><rect x="4.5" y="0.5" width="4" height="3" fill="#fff" stroke="#b0b0b0" stroke-width="1.1"/><rect x="0.5" y="9.5" width="4" height="3" fill="#fff" stroke="#b0b0b0" stroke-width="1.1"/><rect x="4.5" y="9.5" width="4" height="3" fill="#fff" stroke="#b0b0b0" stroke-width="1.1"/><rect x="0.5" y="12.5" width="4" height="3" fill="#fff" stroke="#b0b0b0" stroke-width="1.1"/><rect x="4.5" y="12.5" width="4" height="3" fill="#fff" stroke="#b0b0b0" stroke-width="1.1"/><rect x="8.5" y="5.5" width="3.5" height="3" fill="#fff" stroke="#b0b0b0" stroke-width="1.1"/><rect x="12" y="5.5" width="3.5" height="3" fill="#fff" stroke="#b0b0b0" stroke-width="1.1"/><path d="M7.5 7 H1.5 M4 4.5 L1.5 7 L4 9.5" stroke="#a0a0a0" stroke-width="1.3" fill="none"/></svg>
<div class="t" style="left:749.7px;top:68px;font-size:12px;line-height:12px;color:#9a9a9a;font-weight:normal;transform:scaleX(0.9415);transform-origin:0 0;">Insertar</div>
<svg style="position:absolute;left:798.5px;top:72px;" width="6" height="4" viewBox="0 0 6 4"><path d="M0 0 H6 L3 3 Z" fill="#b0b0b0"/></svg>
<svg style="position:absolute;left:731px;top:87px;" width="17" height="16" viewBox="0 0 17 16"><rect x="0.5" y="0.5" width="4" height="3" fill="#fff" stroke="#b0b0b0" stroke-width="1.1"/><rect x="4.5" y="0.5" width="4" height="3" fill="#fff" stroke="#b0b0b0" stroke-width="1.1"/><rect x="4.5" y="5.5" width="4" height="3" fill="#d0d0d0" stroke="#b0b0b0" stroke-width="1.1"/><rect x="0.5" y="9.5" width="4" height="3" fill="#fff" stroke="#b0b0b0" stroke-width="1.1"/><rect x="4.5" y="9.5" width="4" height="3" fill="#fff" stroke="#b0b0b0" stroke-width="1.1"/><rect x="0.5" y="12.5" width="4" height="3" fill="#fff" stroke="#b0b0b0" stroke-width="1.1"/><rect x="4.5" y="12.5" width="4" height="3" fill="#fff" stroke="#b0b0b0" stroke-width="1.1"/><path d="M9.5 4 L16.5 11 M16.5 4 L9.5 11" stroke="#b8b8b8" stroke-width="1.4"/></svg>
<div class="t" style="left:749.7px;top:90px;font-size:12px;line-height:12px;color:#9a9a9a;font-weight:normal;transform:scaleX(0.9760);transform-origin:0 0;">Eliminar</div>
<svg style="position:absolute;left:802.5px;top:95px;" width="6" height="4" viewBox="0 0 6 4"><path d="M0 0 H6 L3 3 Z" fill="#b0b0b0"/></svg>
<svg style="position:absolute;left:731px;top:109px;" width="16" height="16" viewBox="0 0 16 16"><path d="M0.5 0 V3 M15.5 0 V3 M1 1.5 H15 M3 0 L1 1.5 L3 3 M13 0 L15 1.5 L13 3" stroke="#b0b0b0" stroke-width="1" fill="none"/><rect x="0.5" y="4.5" width="15" height="11" fill="#fff" stroke="#b0b0b0" stroke-width="1.1"/><path d="M0.5 8.2 H15.5 M0.5 11.9 H15.5 M5.5 4.5 V15.5 M10.5 4.5 V15.5" stroke="#c0c0c0" stroke-width="1"/><rect x="1" y="8.5" width="4.5" height="3.4" fill="#a0a0a0"/></svg>
<div class="t" style="left:749.7px;top:113px;font-size:12px;line-height:12px;color:#9a9a9a;font-weight:normal;transform:scaleX(0.9804);transform-origin:0 0;">Formato</div>
<svg style="position:absolute;left:797.5px;top:118px;" width="6" height="4" viewBox="0 0 6 4"><path d="M0 0 H6 L3 3 Z" fill="#b0b0b0"/></svg>
<div class="t" style="left:753.7px;top:137px;font-size:12px;line-height:12px;color:#555555;font-weight:normal;transform:scaleX(0.8647);transform-origin:0 0;">Celdas</div>
<svg style="position:absolute;left:825px;top:65px;" width="16" height="14" viewBox="0 0 16 14"><path d="M1 1.2 H15 V3.5 M1.5 1.2 L7.5 7 L1.5 12.8 H15 V10.5" fill="none" stroke="#a8a8a8" stroke-width="2.4" stroke-linejoin="miter"/></svg>
<svg style="position:absolute;left:846.5px;top:72px;" width="6" height="4" viewBox="0 0 6 4"><path d="M0 0 H6 L3 3 Z" fill="#b0b0b0"/></svg>
<svg style="position:absolute;left:826px;top:87px;" width="15" height="16" viewBox="0 0 15 16"><rect x="0.5" y="0.5" width="13.5" height="15" fill="#f4f0f4" stroke="#b0b0b0"/><rect x="0" y="0" width="14.5" height="2.8" fill="#b0b0b0"/><path d="M7.25 4.5 V12.5 M3.8 9 L7.25 12.5 L10.7 9" stroke="#a8a8a8" stroke-width="2" fill="none"/></svg>
<svg style="position:absolute;left:844px;top:94px;" width="6" height="4" viewBox="0 0 6 4"><path d="M0 0 H6 L3 3 Z" fill="#b0b0b0"/></svg>
<svg style="position:absolute;left:825px;top:110px;" width="15" height="15" viewBox="0 0 15 15"><path d="M8.5 1 L14 6 L9.5 10.5 L4 5.5 Z" fill="#c4c4c4"/><path d="M4 5.5 L9.5 10.5 L7.5 12.5 H4.5 L1 9 Z" fill="#e0e0e0"/><path d="M5 13.5 H14.5" stroke="#c8c8c8" stroke-width="1"/></svg>
<svg style="position:absolute;left:844px;top:118px;" width="6" height="4" viewBox="0 0 6 4"><path d="M0 0 H6 L3 3 Z" fill="#b0b0b0"/></svg>
<svg style="position:absolute;left:869px;top:66px;" width="31" height="28" viewBox="0 0 31 28"><text x="0.5" y="12.2" font-family="Liberation Sans" font-size="15" fill="#b4b4b4" stroke="#b4b4b4" stroke-width="0.4">A</text><text x="1.5" y="26.8" font-family="Liberation Sans" font-size="15" fill="#b4b4b4" stroke="#b4b4b4" stroke-width="0.4">Z</text><path d="M13 8 H30.2 L23.2 15.5 V22.5 H19.8 V15.5 Z" fill="#b0b0b0"/><path d="M16.5 9.6 H26.7 L22.5 14 H20.7 Z" fill="#bdbdbd"/></svg>
<div class="t" style="left:859.0px;top:101px;font-size:12px;line-height:12px;color:#9a9a9a;font-weight:normal;transform:scaleX(0.9746);transform-origin:0 0;">Ordenar y</div>
<div class="t" style="left:866.8px;top:117px;font-size:12px;line-height:12px;color:#9a9a9a;font-weight:normal;transform:scaleX(1.0575);transform-origin:0 0;">filtrar</div>
<svg style="position:absolute;left:897.5px;top:122px;" width="6" height="4" viewBox="0 0 6 4"><path d="M0 0 H6 L3 3 Z" fill="#b0b0b0"/></svg>
<svg style="position:absolute;left:935px;top:66px;" width="30" height="27" viewBox="0 0 30 27"><circle cx="18" cy="10.5" r="8.6" fill="none" stroke="#4a84c2" stroke-width="2.8"/><path d="M12 16.5 L3 25" stroke="#4a84c2" stroke-width="3.8" stroke-linecap="round"/></svg>
<div class="t" style="left:928.4px;top:101px;font-size:12px;line-height:12px;color:#444;font-weight:normal;transform:scaleX(0.9340);transform-origin:0 0;">Buscar y</div>
<div class="t" style="left:916.6px;top:117px;font-size:12px;line-height:12px;color:#444;font-weight:normal;transform:scaleX(0.9737);transform-origin:0 0;">seleccionar</div>
<svg style="position:absolute;left:977px;top:122px;" width="6" height="4" viewBox="0 0 6 4"><path d="M0 0 H6 L3 3 Z" fill="#555"/></svg>
<div class="t" style="left:879.7px;top:136px;font-size:12px;line-height:12px;color:#555555;font-weight:normal;transform:scaleX(0.9860);transform-origin:0 0;">Modificar</div>
<svg style="position:absolute;left:1029px;top:139px;" width="10" height="6" viewBox="0 0 10 6"><path d="M1 5.5 L5 1.5 L9 5.5" stroke="#666" stroke-width="1.6" fill="none"/></svg>
<div style="position:absolute;left:1027px;top:197px;width:21px;height:366px;background:#e6e6e6;"></div>
<div style="position:absolute;left:1030px;top:199px;width:15px;height:15px;background:#fff;border:1px solid #c6c6c6;box-sizing:border-box;"></div>
<svg style="position:absolute;left:1033px;top:204px;" width="9" height="5" viewBox="0 0 9 5"><path d="M0 4.5 L4.5 0 L9 4.5 Z" fill="#777"/></svg>
<div style="position:absolute;left:1030px;top:214px;width:15px;height:335px;background:#fff;border:1px solid #c6c6c6;box-sizing:border-box;"></div>
<div style="position:absolute;left:1030px;top:549px;width:15px;height:14px;background:#fff;border:1px solid #c6c6c6;box-sizing:border-box;"></div>
<svg style="position:absolute;left:1033px;top:554px;" width="9" height="5" viewBox="0 0 9 5"><path d="M0 0 H9 L4.5 4.5 Z" fill="#777"/></svg>
<div style="position:absolute;left:1px;top:563px;width:1047px;height:28px;background:#e6e6e6;"></div>
<div style="position:absolute;left:1px;top:563px;width:1047px;height:1px;background:#ababab;"></div>
<svg style="position:absolute;left:28px;top:572px;" width="5" height="9" viewBox="0 0 5 9"><path d="M4.5 0 V9 L0 4.5 Z" fill="#217346"/></svg>
<svg style="position:absolute;left:57px;top:572px;" width="5" height="9" viewBox="0 0 5 9"><path d="M0 0 V9 L4.5 4.5 Z" fill="#bdbdbd"/></svg>
<div style="position:absolute;left:82px;top:578px;width:2px;height:3px;background:#1e6b41;"></div>
<div style="position:absolute;left:86px;top:578px;width:2px;height:3px;background:#1e6b41;"></div>
<div style="position:absolute;left:90px;top:578px;width:2px;height:3px;background:#1e6b41;"></div>
<div style="position:absolute;left:101px;top:567px;width:1px;height:19px;background:#a8a8a8;"></div>
<div class="t" style="left:114.0px;top:570px;font-size:13px;line-height:13px;color:#444;font-weight:normal;transform:scaleX(0.9804);transform-origin:0 0;">Hoja1</div>
<div style="position:absolute;left:161px;top:567px;width:1px;height:19px;background:#a8a8a8;"></div>
<div class="t" style="left:175.3px;top:570px;font-size:13px;line-height:13px;color:#444;font-weight:normal;transform:scaleX(0.9556);transform-origin:0 0;">Solvetic</div>
<div style="position:absolute;left:233px;top:563px;width:60px;height:25px;background:#fff;border-left:1px solid #ababab;border-right:1px solid #ababab;box-sizing:border-box;"></div>
<div style="position:absolute;left:233px;top:586px;width:60px;height:2px;background:#217346;"></div>
<div class="t" style="left:245.3px;top:570px;font-size:13px;line-height:13px;color:#217346;font-weight:bold;">Hoja3</div>
<svg style="position:absolute;left:326px;top:569px;" width="16" height="16" viewBox="0 0 16 16"><circle cx="8" cy="8" r="7.3" fill="none" stroke="#c0c0c0" stroke-width="1.2"/><path d="M8 4 V12 M4 8 H12" stroke="#c0c0c0" stroke-width="1.6"/></svg>
<div style="position:absolute;left:629px;top:572px;width:2px;height:2px;background:#a8a8a8;"></div>
<div style="position:absolute;left:629px;top:576px;width:2px;height:2px;background:#a8a8a8;"></div>
<div style="position:absolute;left:629px;top:580px;width:2px;height:2px;background:#a8a8a8;"></div>
<div style="position:absolute;left:646px;top:570px;width:15px;height:15px;background:#fff;border:1px solid #ababab;box-sizing:border-box;"></div>
<svg style="position:absolute;left:650px;top:574px;" width="5" height="8" viewBox="0 0 5 8"><path d="M4.5 0 V8 L0 4 Z" fill="#666"/></svg>
<div style="position:absolute;left:661px;top:570px;width:322px;height:15px;background:#fff;border:1px solid #ababab;box-sizing:border-box;"></div>
<div style="position:absolute;left:1012px;top:570px;width:15px;height:15px;background:#fff;border:1px solid #ababab;box-sizing:border-box;"></div>
<svg style="position:absolute;left:1017px;top:574px;" width="5" height="8" viewBox="0 0 5 8"><path d="M0 0 V8 L4.5 4 Z" fill="#a0a0a0"/></svg>
<div style="position:absolute;left:1px;top:591px;width:1047px;height:22px;background:#f1f1f1;"></div>
<div style="position:absolute;left:1px;top:591px;width:1047px;height:1px;background:#c8c8c8;"></div>
<div class="t" style="left:8.5px;top:597px;font-size:12px;line-height:12px;color:#444;font-weight:normal;transform:scaleX(0.8955);transform-origin:0 0;">Listo</div>
<svg style="position:absolute;left:52px;top:595px;" width="14" height="13" viewBox="0 0 14 13"><circle cx="3" cy="3" r="2.9" fill="#8f8f8f"/><rect x="7" y="1" width="6.5" height="2.4" fill="#8f8f8f"/><path d="M1.5 6.5 V12.5 H13 V3.4" stroke="#8f8f8f" stroke-width="1" fill="none"/><path d="M3.5 7.5 H5.5 M7 7.5 H9 M10.5 7.5 H12 M3.5 10 H5.5 M7 10 H9 M10.5 10 H12" stroke="#8f8f8f" stroke-width="1"/></svg>
<div class="t" style="left:454.3px;top:597px;font-size:12px;line-height:12px;color:#444;font-weight:normal;transform:scaleX(0.9188);transform-origin:0 0;">Promedio: 22,22222222</div>
<div class="t" style="left:588.0px;top:597px;font-size:12px;line-height:12px;color:#444;font-weight:normal;transform:scaleX(0.9386);transform-origin:0 0;">Recuento: 20</div>
<div class="t" style="left:671.0px;top:597px;font-size:12px;line-height:12px;color:#444;font-weight:normal;transform:scaleX(0.8925);transform-origin:0 0;">Suma: 200</div>
<div style="position:absolute;left:742px;top:592px;width:38px;height:21px;background:#c6c6c6;"></div>
<svg style="position:absolute;left:753px;top:595px;" width="14" height="13" viewBox="0 0 14 13"><g fill="none" stroke="#666" stroke-width="1"><rect x="0.5" y="0.5" width="13" height="12"/><path d="M0.5 4.5 H13.5 M0.5 8.5 H13.5 M4.8 0.5 V12.5 M9.2 0.5 V12.5"/></g></svg>
<svg style="position:absolute;left:792px;top:595px;" width="15" height="13" viewBox="0 0 15 13"><g fill="none" stroke="#666" stroke-width="1"><rect x="0.5" y="0.5" width="14" height="12"/><rect x="3.5" y="2.5" width="8" height="8"/><path d="M5 5 H10 M5 7 H10"/></g></svg>
<svg style="position:absolute;left:830px;top:595px;" width="15" height="13" viewBox="0 0 15 13"><g fill="none" stroke="#666" stroke-width="1"><path d="M0.5 0.5 H14.5 V12.5 H0.5 Z"/><path d="M5.5 0.5 V7.5 H0.5 M9.5 0.5 V4.5"/></g></svg>
<div style="position:absolute;left:861px;top:601px;width:7px;height:2px;background:#888;"></div>
<div style="position:absolute;left:871px;top:601px;width:100px;height:1px;background:#aaa;"></div>
<div style="position:absolute;left:921px;top:597px;width:1px;height:8px;background:#aaa;"></div>
<svg style="position:absolute;left:975px;top:597px;" width="9" height="9" viewBox="0 0 9 9"><path d="M4.5 0 V9 M0 4.5 H9" stroke="#777" stroke-width="2"/></svg>
<div class="t" style="left:999.0px;top:598px;font-size:12px;line-height:12px;color:#999;font-weight:normal;transform:scaleX(0.8523);transform-origin:0 0;">100 %</div>
<svg style="position:absolute;left:985px;top:546px;" width="63" height="66" viewBox="0 0 63 66"><defs><radialGradient id="wg"><stop offset="0.8" stop-color="#fff" stop-opacity="0.7"/><stop offset="0.95" stop-color="#fff" stop-opacity="0.6"/><stop offset="1" stop-color="#c8ccd4" stop-opacity="0.35"/></radialGradient></defs>
<circle cx="31" cy="32.5" r="27" fill="url(#wg)"/>
<path d="M31.4 42.5 C28 38 22 36 18.4 34.9 C13 33 12 27 13.5 22 C15 15 21 9 29.2 8.9 C36 9 43 12 44.9 19.2 C46 25 42 32 41 39 C40.5 42 38 44 35 46 C32 48 33 49.5 36.5 48.8 C40 48 46 45.5 45.5 48.2 C45 50.5 39 53 35.5 55.5" fill="none" stroke="#5a89c5" stroke-width="2.2" stroke-linecap="round" opacity="0.85"/></svg>
</body></html>
